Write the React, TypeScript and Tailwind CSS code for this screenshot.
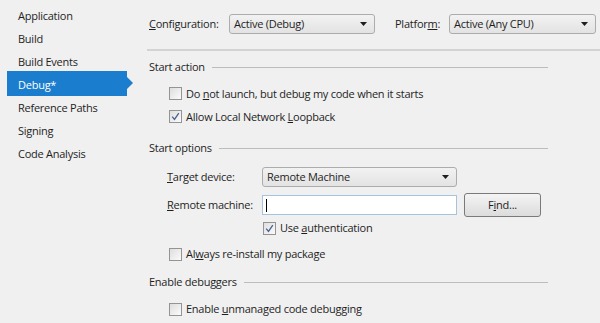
import React from "react";

const navItems = ["Application", "Build", "Build Events", "Debug*", "Reference Paths", "Signing", "Code Analysis"];

function Checkbox({ checked }: { checked?: boolean }) {
  return (
    <span className="w-[13px] h-[13px] border border-[#949494] bg-gradient-to-br from-[#dedede] to-[#fbfbfb] flex items-center justify-center shrink-0">
      {checked && (
        <svg width="9" height="9" viewBox="0 0 9 9">
          <path d="M1.2 4.6 L3.5 7.4 L7.8 1.2" fill="none" stroke="#4a6291" strokeWidth="1.3" />
        </svg>
      )}
    </span>
  );
}

function Dropdown({ value, className }: { value: string; className: string }) {
  return (
    <div
      className={
        "h-[20px] border border-[#acacac] rounded-[3px] bg-gradient-to-b from-[#f2f2f2] to-[#e3e3e3] flex items-center pl-[4px] pr-[7px] " +
        className
      }
    >
      <span className="flex-1">{value}</span>
      <svg width="7" height="4" viewBox="0 0 7 4">
        <path d="M0 0 H7 L3.5 4 Z" fill="#1e1e1e" />
      </svg>
    </div>
  );
}

function CheckRow({ label, checked, className }: { label: React.ReactNode; checked?: boolean; className: string }) {
  return (
    <div className={"flex items-center gap-[4px] " + className}>
      <Checkbox checked={checked} />
      <span>{label}</span>
    </div>
  );
}

function SectionHeader({ title, className }: { title: string; className: string }) {
  return (
    <div className={"h-[16px] flex items-center pl-[2px] pr-[52px] " + className}>
      <span>{title}</span>
      <div className="flex-1 h-px bg-[#bcbcbc] ml-[7px]" />
    </div>
  );
}

export default function App() {
  return (
    <div className="w-[600px] h-[323px] bg-[#f0f0f0] flex overflow-hidden text-[#1e1e1e] text-[11px] tracking-[-0.25px] font-['Open_Sans',sans-serif] leading-[16px] whitespace-nowrap">
      <div className="w-[147px] shrink-0 pt-[4px] pl-[7px]">
        {navItems.map((item) =>
          item === "Debug*" ? (
            <div key={item} className="relative h-[25px] -mt-[2px] pt-[2px] w-[120px] bg-[#1b7dcd] text-white pl-[11px] flex items-center">
              {item}
              <span className="absolute left-full top-[6px] border-y-[6px] border-y-transparent border-l-[6px] border-l-[#1b7dcd]" />
            </div>
          ) : (
            <div key={item} className="h-[23px] pl-[11px] flex items-center">
              {item}
            </div>
          )
        )}
      </div>

      <div className="flex-1 flex flex-col">
        <div className="mt-[14px] h-[20px] flex items-center pl-[2px]">
          <span className="w-[80px]">
            <u>C</u>onfiguration:
          </span>
          <Dropdown value="Active (Debug)" className="w-[146px]" />
          <span className="w-[54px] ml-[20px]">
            Platfor<u>m</u>:
          </span>
          <Dropdown value="Active (Any CPU)" className="w-[147px]" />
        </div>

        <div className="mt-[15px] h-[2px] bg-[#d3d3d3]" />

        <SectionHeader title="Start action" className="mt-[8px]" />
        <CheckRow
          className="h-[23px] mt-[7px] pl-[22px]"
          label={
            <>
              Do <u>n</u>ot launch, but debug my code when it starts
            </>
          }
        />
        <CheckRow
          className="h-[23px] pl-[22px]"
          checked
          label={
            <>
              Allow Local Network <u>L</u>oopback
            </>
          }
        />

        <SectionHeader title="Start options" className="mt-[12px]" />
        <div className="mt-[11px] h-[20px] flex items-center pl-[20px]">
          <span className="w-[95px]">
            <u>T</u>arget device:
          </span>
          <Dropdown value="Remote Machine" className="w-[195px]" />
        </div>
        <div className="mt-[6px] h-[24px] flex items-center pl-[20px]">
          <span className="w-[95px]">
            <u>R</u>emote machine:
          </span>
          <div className="w-[195px] h-[20px] bg-white border border-[#a7c3e0] flex items-center pl-[3px]">
            <div className="w-px h-[13px] bg-black" />
          </div>
          <button className="ml-[7px] w-[77px] h-[24px] border border-[#7a7a7a] rounded-[3px] bg-gradient-to-b from-[#f4f4f4] to-[#dcdcdc] flex items-center justify-center">
            F<u>i</u>nd...
          </button>
        </div>
        <CheckRow
          className="h-[20px] mt-[1px] pl-[116px]"
          checked
          label={
            <>
              Use <u>a</u>uthentication
            </>
          }
        />
        <CheckRow
          className="h-[20px] mt-[6px] pl-[22px]"
          label={
            <>
              Al<u>w</u>ays re-install my package
            </>
          }
        />

        <SectionHeader title="Enable debuggers" className="mt-[10px]" />
        <CheckRow
          className="h-[20px] mt-[9px] pl-[22px]"
          label={
            <>
              Enable <u>u</u>nmanaged code debugging
            </>
          }
        />
      </div>
    </div>
  );
}
